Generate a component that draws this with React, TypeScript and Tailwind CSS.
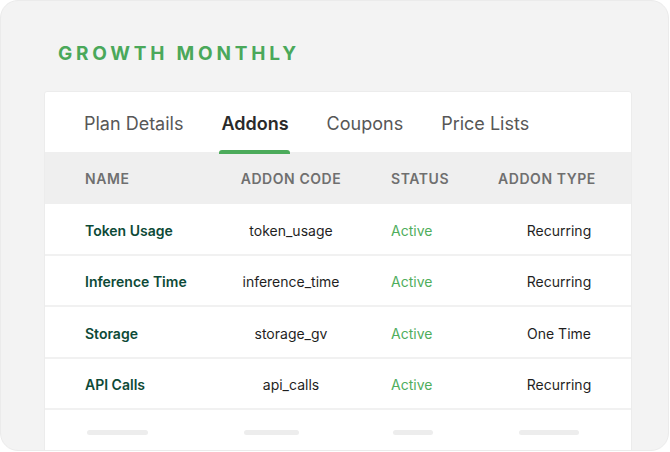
const tabs = ['Plan Details', 'Addons', 'Coupons', 'Price Lists']

const addons = [
  { name: 'Token Usage', code: 'token_usage', status: 'Active', type: 'Recurring' },
  { name: 'Inference Time', code: 'inference_time', status: 'Active', type: 'Recurring' },
  { name: 'Storage', code: 'storage_gv', status: 'Active', type: 'One Time' },
  { name: 'API Calls', code: 'api_calls', status: 'Active', type: 'Recurring' },
]

const cols = 'grid grid-cols-[146px_120px_147px_122px] pl-10'

export default function App() {
  return (
    <div className="w-[670px] h-[452px] bg-white" style={{ fontFamily: 'Inter, "Noto Sans", sans-serif' }}>
      <div className="w-[669px] h-[451px] rounded-[18px] border border-[#ebebeb] bg-[#f3f3f3] overflow-hidden">
        <h1 className="pl-[57px] pt-[39px] text-[19px] leading-[28px] font-bold tracking-[0.2em] text-[#4aa85a]">
          GROWTH MONTHLY
        </h1>

        {/* Card */}
        <div className="mt-[23px] ml-[43px] w-[588px] bg-white border border-[#ececec] rounded-[3px]">
          {/* Tabs */}
          <div className="flex items-center gap-[38px] pl-[39px] h-[60px] pt-[2px]">
            {tabs.map(t => (
              <div key={t} className="relative h-full flex items-center">
                <span
                  className={`text-[18px] ${t === 'Addons' ? 'font-semibold text-[#2a2a2a]' : 'text-[#575757]'}`}
                >
                  {t}
                </span>
                {t === 'Addons' && (
                  <span className="absolute -left-[2px] -right-[1px] -bottom-[2px] h-[4px] rounded-t-[3px] bg-[#4cab5b] z-10" />
                )}
              </div>
            ))}
          </div>

          {/* Header */}
          <div className={`${cols} h-[52px] items-center bg-[#efefef] text-[14px] font-semibold tracking-[0.04em] text-[#6f6f6f]`}>
            <span>NAME</span>
            <span className="text-center">ADDON CODE</span>
            <span className="pl-10">STATUS</span>
            <span>ADDON TYPE</span>
          </div>

          {/* Rows */}
          {addons.map(a => (
            <div key={a.name} className={`${cols} h-[51.5px] pt-[3px] items-center border-b-2 border-[#f1f1f1] text-[14px]`}>
              <span className="font-semibold text-[#0d4a37]">{a.name}</span>
              <span className="text-center text-[#1f1f1f]">{a.code}</span>
              <span className="pl-10 text-[#4fae5c]">{a.status}</span>
              <span className="text-center text-[#1f1f1f]">{a.type}</span>
            </div>
          ))}

          {/* Skeleton row */}
          <div className={`${cols} h-[44px] items-center`}>
            <span className="ml-[2px] w-[61px] h-[5px] rounded-full bg-[#ededed]" />
            <span className="ml-[13px] w-[55px] h-[5px] rounded-full bg-[#ededed]" />
            <span className="ml-[42px] w-[40px] h-[5px] rounded-full bg-[#ededed]" />
            <span className="ml-[21px] w-[60px] h-[5px] rounded-full bg-[#ededed]" />
          </div>
        </div>
      </div>
    </div>
  )
}
